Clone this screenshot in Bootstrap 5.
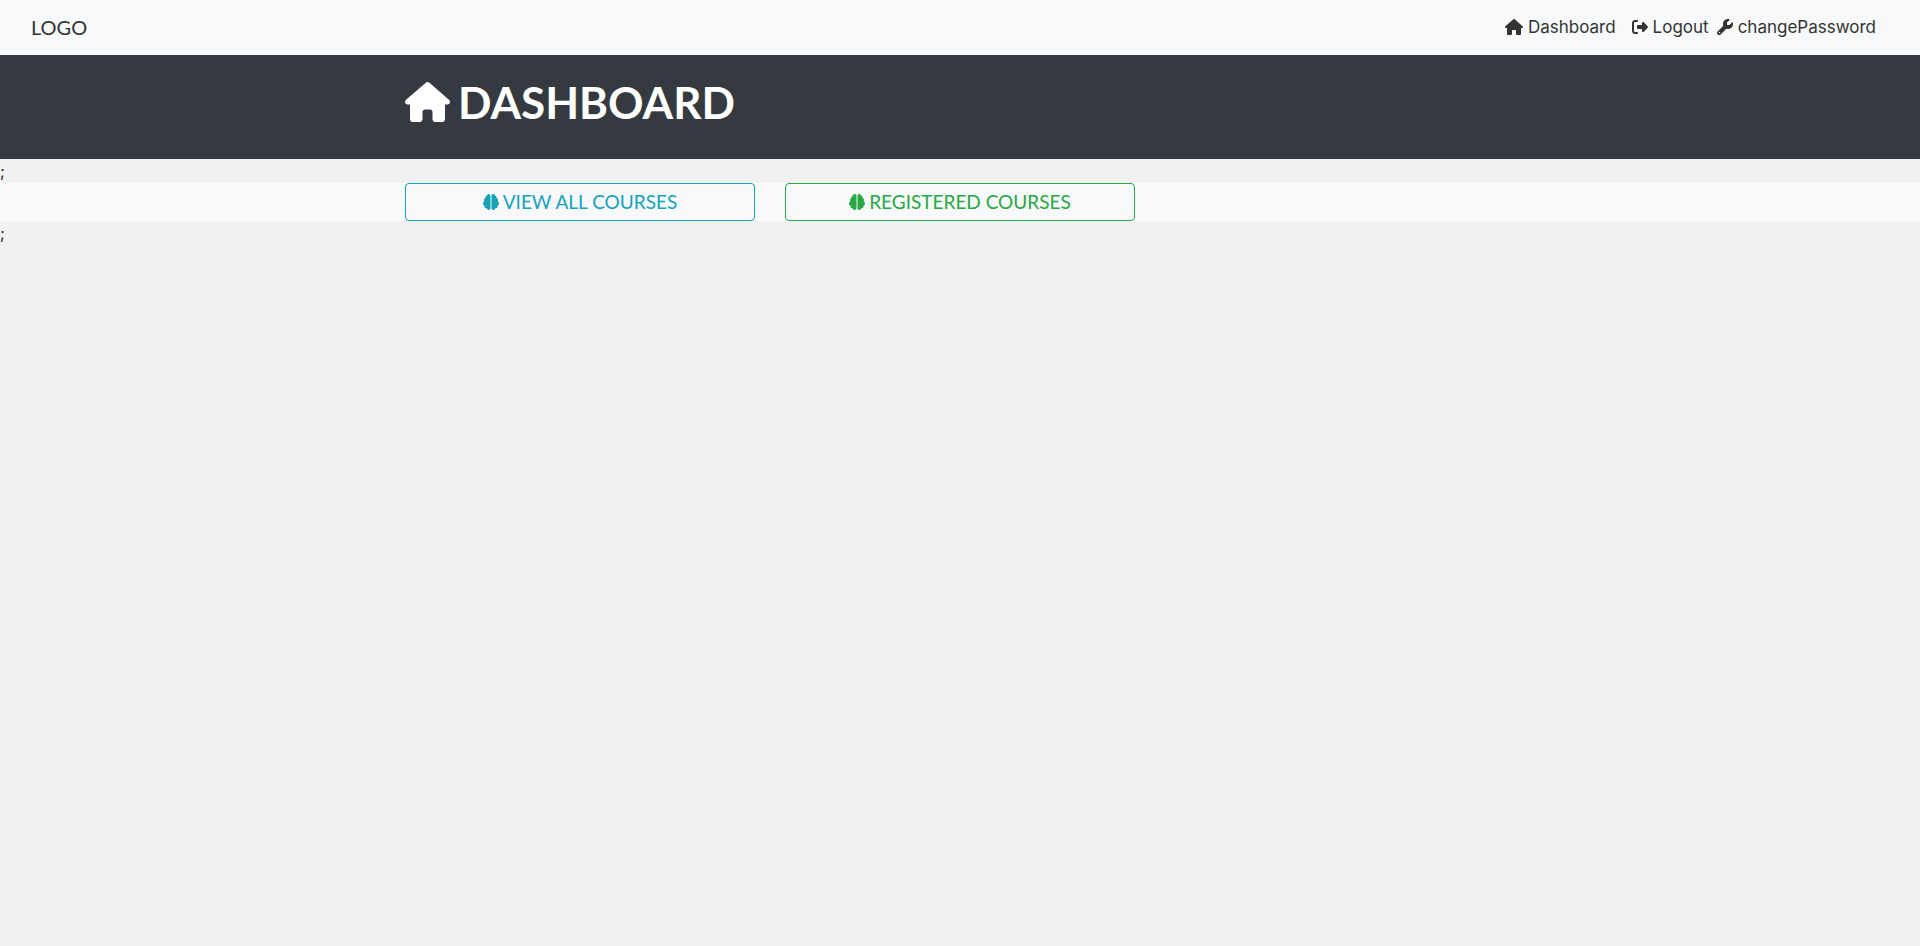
<!DOCTYPE html>
<html lang="en">
<head>
<meta charset="utf-8">
<meta name="viewport" content="width=device-width, initial-scale=1">
<title>Dashboard</title>
<link href="https://cdn.jsdelivr.net/npm/bootstrap@5.3.0/dist/css/bootstrap.min.css" rel="stylesheet">
<style>
  body { background: #f1f1f1; color: #212529; font-family: Inter, "Open Sans", sans-serif; font-size: 16px; line-height: 24px; }
  .pale { background: #f8f9fa; }
  .topbar { min-height: 55px; padding: 0 44px 2px 31px; }
  .brand { color: #333; font-family: Lato, sans-serif; font-size: 20px; }
  .menu-link { color: #333; font-size: 17px; text-decoration: none; display: flex; align-items: center; gap: 5px; }
  .glyph { height: 1em; width: auto; fill: currentColor; flex: none; }
  .menu-link .glyph, .course-btn .glyph { height: 16px; }
  .masthead { background: #343a40; color: #fff; min-height: 104px; padding: 23px 0; }
  .masthead h1 { font-family: Lato, sans-serif; font-size: 44px; line-height: 48px; font-weight: 700; gap: 8px; }
  .masthead .glyph { height: 40px; }
  .container { --bs-gutter-x: 30px; max-width: 1140px; }
  .row { --bs-gutter-x: 30px; }
  .course-btn { font-family: Lato, sans-serif; font-size: 19px; line-height: 24px; gap: 4px; border-radius: 4px; }
  .btn-teal { --bs-btn-color: #17a2b8; --bs-btn-border-color: #17a2b8; --bs-btn-hover-color: #fff; --bs-btn-hover-bg: #17a2b8; }
  .btn-leaf { --bs-btn-color: #28a745; --bs-btn-border-color: #28a745; --bs-btn-hover-color: #fff; --bs-btn-hover-bg: #28a745; }
</style>
</head>
<body>
<svg class="d-none" aria-hidden="true">
  <symbol id="house" viewBox="0 0 576 512"><path d="M575.8 255.5c0 18-15 32.1-32 32.1h-32l.7 160.2c0 2.7-.2 5.4-.5 8.1V472c0 22.1-17.9 40-40 40H456c-1.1 0-2.2 0-3.3-.1c-1.4 .1-2.8 .1-4.2 .1H416 392c-22.1 0-40-17.9-40-40V448 384c0-17.7-14.3-32-32-32H256c-17.7 0-32 14.3-32 32v64 24c0 22.1-17.9 40-40 40H160 128.1c-1.5 0-3-.1-4.5-.2c-1.2 .1-2.4 .2-3.6 .2H104c-22.1 0-40-17.9-40-40V360c0-.9 0-1.9 .1-2.8V287.6H32c-18 0-32-14-32-32.1c0-9 3-17 10-24L266.4 8c7-7 15-8 22-8s15 2 21 7L564.8 231.5c8 7 12 15 11 24z"/></symbol>
  <symbol id="leave" viewBox="0 0 512 512"><path d="M377.9 105.9L500.7 228.7c7.2 7.2 11.3 17.1 11.3 27.3s-4.1 20.1-11.3 27.3L377.9 406.1c-6.4 6.4-15 9.9-24 9.9c-18.7 0-33.9-15.2-33.9-33.9l0-62.1-128 0c-17.7 0-32-14.3-32-32l0-64c0-17.7 14.3-32 32-32l128 0 0-62.1c0-18.7 15.2-33.9 33.9-33.9c9 0 17.6 3.6 24 9.9zM160 96L96 96c-17.7 0-32 14.3-32 32l0 256c0 17.7 14.3 32 32 32l64 0c17.7 0 32 14.3 32 32s-14.3 32-32 32l-64 0c-53 0-96-43-96-96L0 128C0 75 43 32 96 32l64 0c17.7 0 32 14.3 32 32s-14.3 32-32 32z"/></symbol>
  <symbol id="wrench" viewBox="0 0 512 512"><path d="M352 320c88.4 0 160-71.6 160-160c0-15.3-2.2-30.1-6.2-44.2c-3.1-10.8-16.4-13.2-24.3-5.3l-76.8 76.8c-3 3-7.1 4.7-11.3 4.7H336c-8.8 0-16-7.2-16-16V118.6c0-4.2 1.7-8.3 4.7-11.3l76.8-76.8c7.9-7.9 5.4-21.2-5.3-24.3C382.1 2.2 367.3 0 352 0C263.6 0 192 71.6 192 160c0 19.1 3.4 37.5 9.5 54.5L19.9 396.1C7.2 408.8 0 426.1 0 444.1C0 481.6 30.4 512 67.9 512c18 0 35.3-7.2 48-19.9L297.5 310.5c17 6.2 35.4 9.5 54.5 9.5zM80 408a24 24 0 1 1 0 48 24 24 0 1 1 0-48z"/></symbol>
  <symbol id="brain" viewBox="0 0 512 512"><path d="M184 0c30.9 0 56 25.1 56 56V456c0 30.9-25.1 56-56 56c-28.9 0-52.7-21.9-55.7-50.1c-5.2 1.4-10.7 2.1-16.3 2.1c-35.3 0-64-28.7-64-64c0-7.4 1.3-14.6 3.6-21.2C21.4 367.4 0 338.2 0 304c0-31.9 18.7-59.5 45.8-72.3C37.1 220.8 32 207 32 192c0-30.7 21.6-56.3 50.4-62.6C80.8 123.9 80 118 80 112c0-29.9 20.6-55.1 48.3-62.1C131.3 21.9 155.1 0 184 0zM328 0c28.9 0 52.6 21.9 55.7 49.9c27.8 7 48.3 32.1 48.3 62.1c0 6-.8 11.9-2.4 17.4c28.8 6.2 50.4 31.9 50.4 62.6c0 15-5.1 28.8-13.8 39.7C493.3 244.5 512 272.1 512 304c0 34.2-21.4 63.4-51.6 74.8c2.3 6.6 3.6 13.8 3.6 21.2c0 35.3-28.7 64-64 64c-5.6 0-11.1-.7-16.3-2.1c-3 28.2-26.8 50.1-55.7 50.1c-30.9 0-56-25.1-56-56V56c0-30.9 25.1-56 56-56z"/></symbol>
</svg>
<nav class="topbar pale d-flex flex-wrap align-items-center justify-content-between">
  <a class="brand text-decoration-none" href="#">LOGO</a>
  <div class="d-flex flex-wrap">
    <a class="menu-link me-3" href="#"><svg class="glyph" viewBox="0 0 576 512"><use href="#house"/></svg>Dashboard</a>
    <a class="menu-link me-2" href="#"><svg class="glyph" viewBox="0 0 512 512"><use href="#leave"/></svg>Logout</a>
    <a class="menu-link" href="#"><svg class="glyph" viewBox="0 0 512 512"><use href="#wrench"/></svg>changePassword</a>
  </div>
</nav>
<header class="masthead">
  <div class="container">
    <h1 class="d-flex align-items-center m-0"><svg class="glyph" viewBox="0 0 576 512"><use href="#house"/></svg>DASHBOARD</h1>
  </div>
</header>
<div>;</div>
<section class="pale">
  <div class="container">
    <div class="row">
      <div class="col-md-4"><button type="button" class="btn btn-teal course-btn w-100 d-flex align-items-center justify-content-center"><svg class="glyph" viewBox="0 0 512 512"><use href="#brain"/></svg>VIEW ALL COURSES</button></div>
      <div class="col-md-4"><button type="button" class="btn btn-leaf course-btn w-100 d-flex align-items-center justify-content-center"><svg class="glyph" viewBox="0 0 512 512"><use href="#brain"/></svg>REGISTERED COURSES</button></div>
    </div>
  </div>
</section>
<div>;</div>
<script src="https://cdn.jsdelivr.net/npm/bootstrap@5.3.0/dist/js/bootstrap.bundle.min.js"></script>
</body>
</html>
